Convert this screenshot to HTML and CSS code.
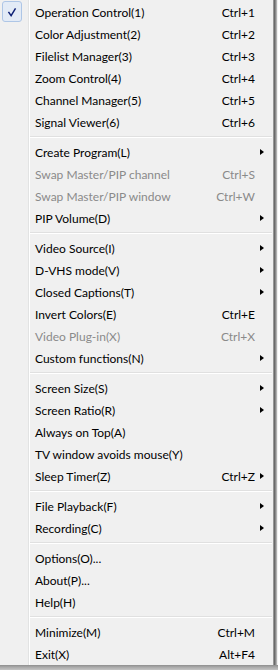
FILE: index.html
```html
<!DOCTYPE html>
<html>
<head>
<meta charset="utf-8">
<link rel="stylesheet" href="styles.css">
</head>
<body>
<div class="frame">
  <div class="menu">
    <div class="gutter"></div>
    <div class="item checked"><span class="check"><svg width="20" height="21" viewBox="0 0 20 21"><path d="M6.5 10.5 L9 14 L13.5 6.5" fill="none" stroke="#0d1f75" stroke-width="1.6" stroke-linecap="square"/></svg></span><span class="label">Operation Control(1)</span><span class="key">Ctrl+1</span><span class="arr"></span></div>
    <div class="item"><span class="label">Color Adjustment(2)</span><span class="key">Ctrl+2</span><span class="arr"></span></div>
    <div class="item"><span class="label">Filelist Manager(3)</span><span class="key">Ctrl+3</span><span class="arr"></span></div>
    <div class="item"><span class="label">Zoom Control(4)</span><span class="key">Ctrl+4</span><span class="arr"></span></div>
    <div class="item"><span class="label">Channel Manager(5)</span><span class="key">Ctrl+5</span><span class="arr"></span></div>
    <div class="item"><span class="label">Signal Viewer(6)</span><span class="key">Ctrl+6</span><span class="arr"></span></div>
    <div class="sep"></div>
    <div class="item"><span class="label">Create Program(L)</span><span class="key"></span><span class="arr sub"></span></div>
    <div class="item disabled"><span class="label">Swap Master/PIP channel</span><span class="key">Ctrl+S</span><span class="arr"></span></div>
    <div class="item disabled"><span class="label">Swap Master/PIP window</span><span class="key">Ctrl+W</span><span class="arr"></span></div>
    <div class="item"><span class="label">PIP Volume(D)</span><span class="key"></span><span class="arr sub"></span></div>
    <div class="sep"></div>
    <div class="item"><span class="label">Video Source(I)</span><span class="key"></span><span class="arr sub"></span></div>
    <div class="item"><span class="label">D-VHS mode(V)</span><span class="key"></span><span class="arr sub"></span></div>
    <div class="item"><span class="label">Closed Captions(T)</span><span class="key"></span><span class="arr sub"></span></div>
    <div class="item"><span class="label">Invert Colors(E)</span><span class="key">Ctrl+E</span><span class="arr"></span></div>
    <div class="item disabled"><span class="label">Video Plug-in(X)</span><span class="key">Ctrl+X</span><span class="arr"></span></div>
    <div class="item"><span class="label">Custom functions(N)</span><span class="key"></span><span class="arr sub"></span></div>
    <div class="sep"></div>
    <div class="item"><span class="label">Screen Size(S)</span><span class="key"></span><span class="arr sub"></span></div>
    <div class="item"><span class="label">Screen Ratio(R)</span><span class="key"></span><span class="arr sub"></span></div>
    <div class="item"><span class="label">Always on Top(A)</span><span class="key"></span><span class="arr"></span></div>
    <div class="item"><span class="label">TV window avoids mouse(Y)</span><span class="key"></span><span class="arr"></span></div>
    <div class="item"><span class="label">Sleep Timer(Z)</span><span class="key">Ctrl+Z</span><span class="arr sub"></span></div>
    <div class="sep"></div>
    <div class="item"><span class="label">File Playback(F)</span><span class="key"></span><span class="arr sub"></span></div>
    <div class="item"><span class="label">Recording(C)</span><span class="key"></span><span class="arr sub"></span></div>
    <div class="sep"></div>
    <div class="item"><span class="label">Options(O)...</span><span class="key"></span><span class="arr"></span></div>
    <div class="item"><span class="label">About(P)...</span><span class="key"></span><span class="arr"></span></div>
    <div class="item"><span class="label">Help(H)</span><span class="key"></span><span class="arr"></span></div>
    <div class="sep"></div>
    <div class="item"><span class="label">Minimize(M)</span><span class="key">Ctrl+M</span><span class="arr"></span></div>
    <div class="item"><span class="label">Exit(X)</span><span class="key">Alt+F4</span><span class="arr"></span></div>
  </div>
</div>
</body>
</html>
```

FILE: styles.css
```css
html, body {
  margin: 0;
  padding: 0;
  background: #6b6b6b;
}
.frame {
  width: 278px;
  height: 670px;
  background: linear-gradient(to bottom, #f0f0f0 0, #f0f0f0 665px, #8e8e8e 665px, #a8a8a8 667px, #c4c4c4 670px);
  display: flex;
}
.menu {
  position: relative;
  width: 274px;
  height: 665px;
  box-sizing: border-box;
  padding-top: 1px;
  background: #f0f0f0;
  border-right: 1px solid #979797;
  box-shadow: 1px 0 0 #6a6a6a, 2px 0 0 #8a8a8a, 3px 0 0 #b0b0b0;
  font-family: Lato, "Liberation Sans", sans-serif;
  font-size: 12px;
  color: #000;
  display: flex;
  flex-direction: column;
}
.gutter {
  position: absolute;
  left: 28px;
  top: 0;
  bottom: 0;
  width: 1px;
  background: #e2e3e3;
  box-shadow: 1px 0 0 #ffffff;
}
.item {
  position: relative;
  height: 22px;
  display: grid;
  grid-template-columns: 1fr auto 9px;
  align-items: center;
  padding-left: 35px;
  padding-right: 9px;
  white-space: nowrap;
}
.item.disabled {
  color: #8a8a8a;
}
.key {
  text-align: right;
}
.arr.sub {
  justify-self: end;
  width: 0;
  height: 0;
  border-top: 3.5px solid transparent;
  border-bottom: 3.5px solid transparent;
  border-left: 4px solid #000;
}
.check {
  position: absolute;
  left: 2px;
  top: 0;
  width: 20px;
  height: 21px;
  box-sizing: border-box;
  border: 1px solid #aec6e6;
  border-radius: 3px;
  background: #e3ebf6;
  display: flex;
}
.sep {
  height: 8px;
  position: relative;
}
.sep::before {
  content: "";
  position: absolute;
  left: 30px;
  right: 1px;
  top: 3px;
  height: 1px;
  background: #e0e0e0;
  box-shadow: 0 1px 0 #ffffff;
}
```
